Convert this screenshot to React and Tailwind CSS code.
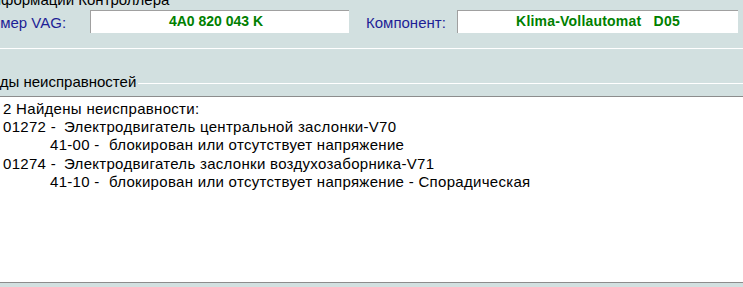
import React from "react";

const faults = [
  {
    code: "01272 -",
    name: "Электродвигатель центральной заслонки-V70",
    sub: "41-00 -",
    detail: "блокирован или отсутствует напряжение",
  },
  {
    code: "01274 -",
    name: "Электродвигатель заслонки воздухозаборника-V71",
    sub: "41-10 -",
    detail: "блокирован или отсутствует напряжение - Спорадическая",
  },
];

function Field({ className, children }) {
  return (
    <div
      className={`${className} h-[23px] bg-white border-t border-l border-[#a0a0a0] pt-[2px] text-center text-[14px] leading-[17px] font-bold text-[#008000] whitespace-pre`}
    >
      {children}
    </div>
  );
}

export default function App() {
  return (
    <div className="w-[743px] h-[287px] overflow-hidden bg-[#d2e0e0] font-['Liberation_Sans',Arial,sans-serif] text-[15px] text-black">
      {/* controller info group */}
      <div className="-mt-[9px] -ml-[18px] h-[17px] leading-[17px] whitespace-nowrap">
        Информации Контроллера
      </div>

      <div className="mt-[2px] flex h-[23px]">
        <div className="-ml-[19px] w-[109px] mt-[4px] leading-[17px] text-[#1e1e96] whitespace-nowrap">
          Номер VAG:
        </div>
        <Field className="w-[259px] pr-[8px]">4A0 820 043 K</Field>
        <div className="ml-[17px] w-[91px] mt-[4px] leading-[17px] text-[#1e1e96]">
          Компонент:
        </div>
        <Field className="w-[281px] tracking-[0.2px]">Klima-Vollautomat   D05</Field>
      </div>

      <div className="mt-[15px] h-px bg-white" />

      {/* fault codes group */}
      <div className="mt-[24px] flex items-start h-[17px]">
        <span className="-ml-[17px] leading-[17px] whitespace-nowrap">
          Коды неисправностей
        </span>
        <div className="flex-1 ml-[2px] mt-[10px] h-px bg-white" />
      </div>

      <div className="mt-[6px] h-[187px] bg-white border-y border-[#8c8c8c] pt-[3px] pl-[3px] text-[15px] tracking-[0.3px] leading-[18.2px] whitespace-nowrap">
        <div>2 Найдены неисправности:</div>
        {faults.map((f) => (
          <React.Fragment key={f.code}>
            <div className="flex">
              <span className="w-[61px]">{f.code}</span>
              <span>{f.name}</span>
            </div>
            <div className="flex pl-[47px]">
              <span className="w-[59px]">{f.sub}</span>
              <span>{f.detail}</span>
            </div>
          </React.Fragment>
        ))}
      </div>
    </div>
  );
}
